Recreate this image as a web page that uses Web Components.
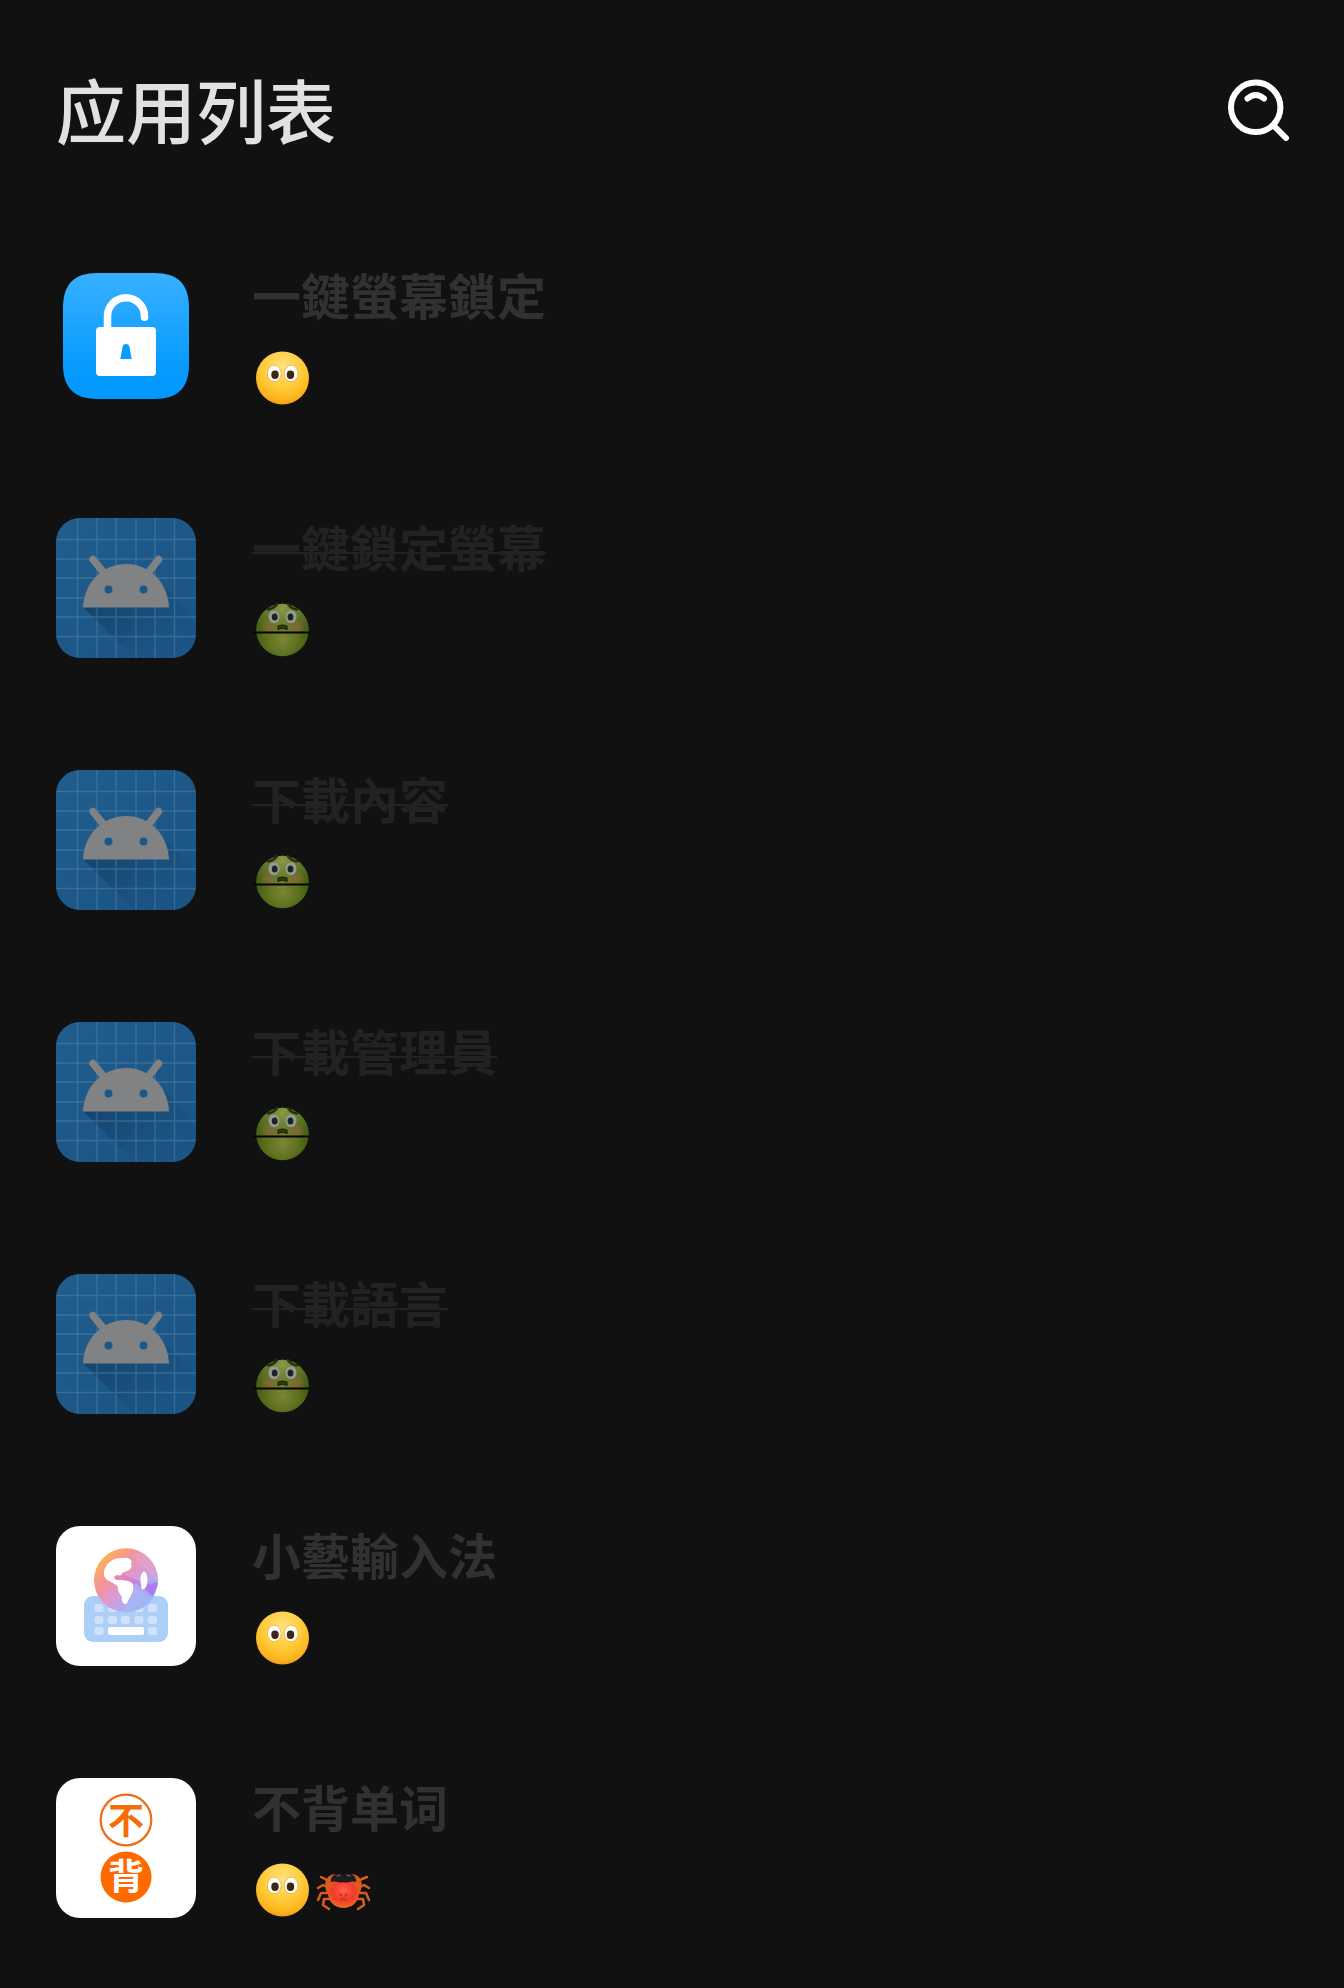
<!DOCTYPE html>
<html lang="zh">
<head>
<meta charset="utf-8">
<meta name="viewport" content="width=device-width, initial-scale=1">
<title>应用列表</title>
<style>
  html { background: #111; }
  body {
    margin: 0;
    background: #111;
    color: #e1e1e1;
    font-family: "Noto Sans CJK SC", "Noto Sans", sans-serif;
  }
</style>
</head>
<body>
<app-page>
  <page-header slot="header">应用列表</page-header>
  <app-row icon="lock" moods="calm">一鍵螢幕鎖定</app-row>
  <app-row icon="android" moods="sick" disabled>一鍵鎖定螢幕</app-row>
  <app-row icon="android" moods="sick" disabled>下載內容</app-row>
  <app-row icon="android" moods="sick" disabled>下載管理員</app-row>
  <app-row icon="android" moods="sick" disabled>下載語言</app-row>
  <app-row icon="keyboard" moods="calm">小藝輸入法</app-row>
  <app-row icon="words" moods="calm crab">不背单词</app-row>
</app-page>

<script>
const ICONS = {
  lock: `
    <defs><linearGradient id="g" x1="0" y1="0" x2="0" y2="1"><stop offset="0" stop-color="#38b0ff"/><stop offset=".75" stop-color="#069bff"/><stop offset="1" stop-color="#0098ff"/></linearGradient></defs>
    <path d="M42 7H98C122 7 133 18 133 42V98C133 122 122 133 98 133H42C18 133 7 122 7 98V42C7 18 18 7 42 7Z" fill="url(#g)"/>
    <path d="M51.5 64V50.2A18.5 18.5 0 0 1 88.5 50.2V51.2" fill="none" stroke="#fff" stroke-width="7.5" stroke-linecap="round"/>
    <rect x="40" y="61" width="60" height="49" rx="4" fill="#fff"/>
    <path d="M64.3 93L66.5 81Q67 78 70 78Q73 78 73.5 81L75.7 93Z" fill="#0c9cff"/>`,
  android: `
    <defs>
      <clipPath id="c"><rect width="140" height="140" rx="24"/></clipPath>
      <linearGradient id="g" x1="0" y1="0" x2="1" y2="1"><stop offset="0" stop-color="#205d8d"/><stop offset="1" stop-color="#1a5384"/></linearGradient>
      <linearGradient id="s" x1="50" y1="60" x2="105" y2="130" gradientUnits="userSpaceOnUse"><stop offset="0" stop-color="#0d3456" stop-opacity=".6"/><stop offset="1" stop-color="#0d3456" stop-opacity="0"/></linearGradient>
    </defs>
    <g clip-path="url(#c)">
      <rect width="140" height="140" fill="url(#g)"/>
      <path d="M27 89L78 140H140V102L105 66Z" fill="url(#s)"/>
      <path d="M21.5 0V140M41 0V140M60 0V140M80 0V140M99 0V140M118.5 0V140M0 21.5H140M0 41H140M0 60H140M0 80H140M0 99H140M0 118.5H140" stroke="#5c90ad" stroke-opacity=".42" stroke-width="1.4"/>
    </g>
    <path d="M37 41.5L48 55M102.5 41.5L92 55" stroke="#818283" stroke-width="7.5" stroke-linecap="round"/>
    <path d="M27 89.5C28 64 47 46 70 46S112 64 113 89.5Z" fill="#818283"/>
    <circle cx="52.5" cy="71.5" r="4" fill="#1c5888"/><circle cx="87.5" cy="71.5" r="4" fill="#1c5888"/>`,
  keyboard: `
    <defs>
      <linearGradient id="g" x1=".08" y1=".15" x2=".85" y2=".9"><stop offset="0" stop-color="#fbb550"/><stop offset=".3" stop-color="#f39495"/><stop offset=".5" stop-color="#e298c8"/><stop offset=".72" stop-color="#bda5ea"/><stop offset="1" stop-color="#7eaaf8"/></linearGradient>
      <linearGradient id="p" x1="0" y1="0" x2="1" y2=".4"><stop offset="0" stop-color="#e871b4" stop-opacity=".3"/><stop offset="1" stop-color="#a87af6"/></linearGradient>
      <clipPath id="c"><circle cx="70" cy="54.3" r="32"/></clipPath>
    </defs>
    <rect width="140" height="140" rx="24" fill="#fff"/>
    <rect x="28" y="70" width="84" height="46" rx="9" fill="#abcff6"/>
    <g fill="#d0e2fb">${[78, 90, 101].map((y, r) => [38.5, 52, 65, 78.5, 92].filter((x, i) => r < 2 || i % 4 === 0).map(x => `<rect x="${x}" y="${y}" width="9" height="8" rx="2.5"/>`).join('')).join('')}</g>
    <rect x="52" y="101" width="36" height="8" rx="2" fill="#fff"/>
    <circle cx="70" cy="54.3" r="32" fill="url(#g)"/>
    <g clip-path="url(#c)">
      <path d="M75 28L102 56L98 40L88 26Z" fill="#e7a5c6" opacity=".6"/>
      <path d="M57 54Q77 62 96 71L103 56L93 58Q75 53 66 47Z" fill="url(#p)"/>
      <path d="M79 57Q91 64 98 72L86 86H66Z" fill="#a8b9f5" opacity=".7"/>
    </g>
    <path d="M48 49C47 39 56 31 67 32C73 31 77 34 75 38C77 43 72 45 68 46C65 47 66 51 62 49C57 49 57 53 61 54C66 54 74 54 77 58C79 65 73 72 71 77C69 80 65 76 66 72C65 68 61 66 62 61C59 56 49 56 48 49Z" fill="#fff"/>
    <path d="M87 46C91 44 92 52 91 58C90 64 85 66 85 59C84 54 84 49 87 46Z" fill="#fff" opacity=".95"/>`,
  words: `
    <rect width="140" height="140" rx="24" fill="#fff"/>
    <circle cx="70" cy="42" r="25.3" fill="#fff" stroke="#ee6c12" stroke-width="2.2"/>
    <circle cx="70" cy="99" r="25.5" fill="#ff6a00"/>
    <g font-size="36" font-weight="700" text-anchor="middle">
      <text x="70" y="56" fill="#f56c08">不</text>
      <text x="70" y="112" fill="#fff">背</text>
    </g>`
};

const MOODS = {
  calm: `
    <defs><radialGradient id="g" cx=".5" cy=".3" r=".72"><stop offset="0" stop-color="#ffe281"/><stop offset=".55" stop-color="#ffca38"/><stop offset=".85" stop-color="#fcb41b"/><stop offset="1" stop-color="#ee9818"/></radialGradient></defs>
    <circle cx="30.5" cy="28" r="26.5" fill="url(#g)"/>
    <g fill="#fffdf7" stroke="#e9a62b" stroke-width=".7"><ellipse cx="22.3" cy="23.5" rx="6.9" ry="8.3"/><ellipse cx="39.2" cy="23.5" rx="6.9" ry="8.3"/></g>
    <g fill="#3c2618"><ellipse cx="23" cy="24.7" rx="3.7" ry="4.2"/><ellipse cx="38.5" cy="24.7" rx="3.7" ry="4.2"/></g>`,
  sick: `
    <defs>
      <radialGradient id="g" cx=".5" cy=".68" r=".68"><stop offset="0" stop-color="#7c8536"/><stop offset=".35" stop-color="#637522"/><stop offset=".7" stop-color="#466110"/><stop offset="1" stop-color="#4d6a2a"/></radialGradient>
      <radialGradient id="h" cx=".5" cy=".1" r=".55"><stop offset="0" stop-color="#8b9a48"/><stop offset="1" stop-color="#7c8a3a" stop-opacity="0"/></radialGradient>
      <radialGradient id="k"><stop offset="0" stop-color="#80683a"/><stop offset="1" stop-color="#806832" stop-opacity="0"/></radialGradient>
    </defs>
    <circle cx="30.5" cy="28" r="26.3" fill="url(#g)"/>
    <circle cx="30.5" cy="28" r="26.3" fill="url(#h)"/>
    <circle cx="17" cy="25" r="10" fill="url(#k)"/><circle cx="44" cy="25" r="10" fill="url(#k)"/>
    <path d="M16 7.5Q22 6.500 25 2M45 7.500Q39 6.500 36 2" fill="none" stroke="#26310f" stroke-width="2.6" stroke-linecap="round"/>
    <g fill="#969a90"><ellipse cx="22" cy="14.7" rx="5.5" ry="6.5"/><ellipse cx="39" cy="14.7" rx="5.5" ry="6.5"/></g>
    <g fill="#1b2226"><ellipse cx="22.7" cy="15" rx="2.9" ry="3.5"/><ellipse cx="38.5" cy="15" rx="2.9" ry="3.5"/></g>
    <path d="M26 27.5V24Q30.500 22.500 35 24V27.500Q30.500 25 26 27.500Z" fill="#333f12" stroke="#232b0a" stroke-width="1.3" stroke-linejoin="round"/>
    <path d="M1 30.5H57" stroke="#050505" stroke-width="2"/>`,
  crab: `
    <defs><radialGradient id="g" cx=".5" cy=".35" r=".65"><stop offset="0" stop-color="#ff624b"/><stop offset=".55" stop-color="#f13b2a"/><stop offset="1" stop-color="#f06a20"/></radialGradient></defs>
    <g fill="none" stroke="#d95e1e" stroke-width="2.5" stroke-linecap="round" stroke-linejoin="round">
      <path d="M18 21L12 17L8 15M16 26L10 23L5 26M16 31L8 31L5 38M19 37L11 37L10 43L16 47"/>
      <path d="M43 21L49 17L54 15M45 26L51 23L56 26M45 31L53 31L56 38M42 37L50 37L51 43L45 47"/>
    </g>
    <path d="M16 34C9 24 12 12 23 12L27 18L20 30ZM45 34C52 24 49 12 38 12L34 18L41 30Z" fill="#df5a20"/>
    <path d="M30.5 19C40 19 46 26 46 32C45 41 38 46 30.500 46S16 41 15 32C15 26 21 19 30.500 19Z" fill="url(#g)"/>
    <path d="M18 20C17 14 23 10 29 12L30.5 14L32 12C38 10 44 14 43 20C38 18 34 22 30.500 20C27 22 23 18 18 20Z" fill="#211a20"/>
    <path d="M24 14L27 13M34 13L37 14" stroke="#737078" stroke-width="1.2" stroke-linecap="round"/>
    <path d="M27 32L29 34M34 32L32 34M28 38Q30.500 35 33 38" fill="none" stroke="#bd2a20" stroke-width="1.2" stroke-linecap="round"/>`
};

class AppPage extends HTMLElement {
  constructor() {
    super();
    this.attachShadow({ mode: 'open' }).innerHTML = `
      <style>
        :host { display: flex; flex-direction: column; min-height: 100vh; box-sizing: border-box; padding-bottom: 14px; }
        main { display: flex; flex-direction: column; }
      </style>
      <slot name="header"></slot>
      <main><slot></slot></main>`;
  }
}

class PageHeader extends HTMLElement {
  constructor() {
    super();
    this.attachShadow({ mode: 'open' }).innerHTML = `
      <style>
        :host { display: block; }
        header { display: flex; align-items: center; justify-content: space-between; padding: 67px 52px 59px 56px; }
        h1 { margin: 0; font-size: 70px; line-height: 84px; font-weight: 500; color: #e1e1e1; }
        button { display: block; margin: 0; padding: 0; border: 0; background: none; color: #fff; cursor: pointer; }
        svg { display: block; width: 64px; height: 64px; }
      </style>
      <header>
        <h1><slot></slot></h1>
        <button type="button" aria-label="搜索">
          <svg viewBox="0 0 64 64" fill="none" stroke="currentColor" stroke-width="6" stroke-linecap="round">
            <circle cx="27.7" cy="30.3" r="24.7"/>
            <path d="M46 49L58 61"/>
            <path d="M19.5 21.5Q27.700 14.500 36 21.500"/>
          </svg>
        </button>
      </header>`;
  }
}

class AppIcon extends HTMLElement {
  connectedCallback() {
    if (this.shadowRoot) return;
    this.attachShadow({ mode: 'open' }).innerHTML = `
      <style>
        :host { display: block; flex: none; width: 140px; height: 140px; }
        svg { display: block; width: 100%; height: 100%; }
      </style>
      <svg viewBox="0 0 140 140" aria-hidden="true">${ICONS[this.getAttribute('name')]}</svg>`;
  }
}

class MoodFace extends HTMLElement {
  connectedCallback() {
    if (this.shadowRoot) return;
    this.attachShadow({ mode: 'open' }).innerHTML = `
      <style>
        :host { display: block; width: 61px; height: 56px; }
        svg { display: block; width: 100%; height: 100%; }
      </style>
      <svg viewBox="0 0 61 56" aria-hidden="true">${MOODS[this.getAttribute('name')]}</svg>`;
  }
}

class AppRow extends HTMLElement {
  connectedCallback() {
    if (this.shadowRoot) return;
    const moods = this.getAttribute('moods').split(' ');
    this.attachShadow({ mode: 'open' }).innerHTML = `
      <style>
        :host { display: block; --name: #313131; }
        :host([disabled]) { --name: #222; }
        article { display: flex; align-items: center; gap: 56px; padding: 56px; }
        .info { display: flex; flex-direction: column; align-items: flex-start; gap: 28px; min-width: 0; }
        h2 { margin: 0; font-size: 49px; line-height: 56px; font-weight: 700; color: var(--name); }
        /* struck slightly below the middle of the glyphs */
        :host([disabled]) h2 { background: linear-gradient(var(--name), var(--name)) 0 34px / 100% 2px no-repeat; }
        .moods { display: flex; }
      </style>
      <article>
        <app-icon name="${this.getAttribute('icon')}"></app-icon>
        <div class="info">
          <h2><slot></slot></h2>
          <div class="moods">${moods.map(m => `<mood-face name="${m}"></mood-face>`).join('')}</div>
        </div>
      </article>`;
  }
}

customElements.define('app-page', AppPage);
customElements.define('page-header', PageHeader);
customElements.define('app-icon', AppIcon);
customElements.define('mood-face', MoodFace);
customElements.define('app-row', AppRow);
</script>
</body>
</html>
